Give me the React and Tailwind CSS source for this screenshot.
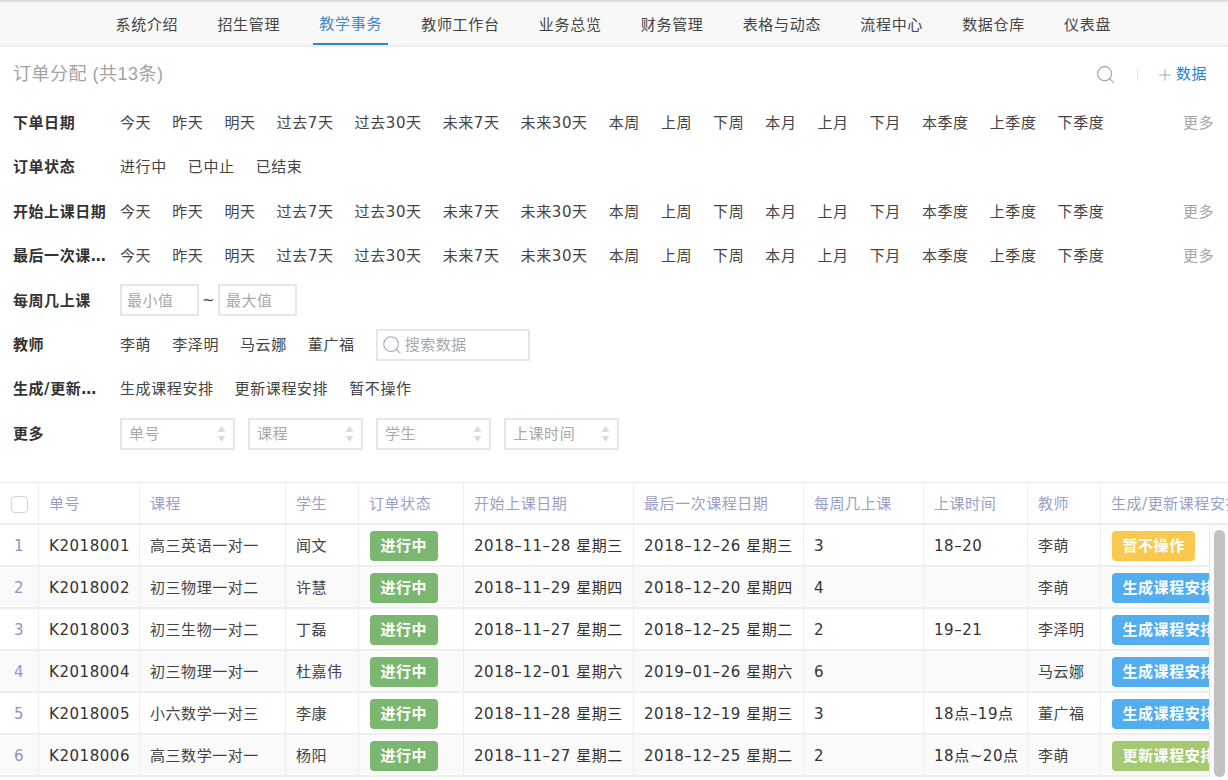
import React from "react";
import { Search, Plus } from "lucide-react";

const nav = ["系统介绍","招生管理","教学事务","教师工作台","业务总览","财务管理","表格与动态","流程中心","数据仓库","仪表盘"];
const dates = ["今天","昨天","明天","过去7天","过去30天","未来7天","未来30天","本周","上周","下周","本月","上月","下月","本季度","上季度","下季度"];
const cols = "grid grid-cols-[39px_101px_146px_73px_105px_170px_170px_120px_104px_73px_128px]";
const rows = [
  ["1","K2018001","高三英语一对一","闻文","2018–11–28 星期三","2018–12–26 星期三","3","18–20","李萌","暂不操作","y"],
  ["2","K2018002","初三物理一对二","许慧","2018–11–29 星期四","2018–12–20 星期四","4","","李萌","生成课程安排","b"],
  ["3","K2018003","初三生物一对二","丁磊","2018–11–27 星期二","2018–12–25 星期二","2","19–21","李泽明","生成课程安排","b"],
  ["4","K2018004","初三物理一对一","杜嘉伟","2018–12–01 星期六","2019–01–26 星期六","6","","马云娜","生成课程安排","b"],
  ["5","K2018005","小六数学一对三","李康","2018–11–28 星期三","2018–12–19 星期三","3","18点–19点","董广福","生成课程安排","b"],
  ["6","K2018006","高三数学一对一","杨阳","2018–11–27 星期二","2018–12–25 星期二","2","18点~20点","李萌","更新课程安排","g"],
];
const heads = ["单号","课程","学生","订单状态","开始上课日期","最后一次课程日期","每周几上课","上课时间","教师","生成/更新课程安排"];
const cell = "flex items-center px-[10px] pt-[2px] border-r border-[#eeeeee] whitespace-nowrap overflow-hidden";

function FilterRow({ label, children, more }) {
  return (
    <div className="flex items-center h-[44.4px] pl-[13px] pr-[14px] pt-[2px]">
      <div className="w-[95px] mr-[12px] shrink-0 font-bold text-[#333333] truncate">{label}</div>
      <div className="flex-1 flex items-center min-w-0">{children}</div>
      {more && <div className="text-[#a6a6a6]">更多</div>}
    </div>
  );
}
function Options({ items }) {
  return <div className="flex items-center gap-[21px] tracking-[0.6px] text-[#444444]">{items.map((d) => <span key={d}>{d}</span>)}</div>;
}
function SelectBox({ label, w }) {
  return (
    <div className={`flex items-center justify-between h-[32px] border-2 border-[#e6e6e6] pl-[7px] pr-[7px] text-[#a8a8a8] ${w}`}>
      <span>{label}</span>
      <svg width="9" height="18" viewBox="0 0 9 18"><path d="M4.5 1 L8.5 7 H0.5 Z" fill="#dcdcdc"/><path d="M4.5 17 L8.5 11 H0.5 Z" fill="#dcdcdc"/></svg>
    </div>
  );
}
function Tag({ t, k }) {
  const c = k === "y" ? "bg-[#f9c94e]" : k === "b" ? "bg-[#52aeee]" : k === "s" ? "bg-[#7cb772]" : "bg-[#a5c971]";
  return <span className={`inline-flex items-center shrink-0 ml-px h-[30px] px-[10.5px] rounded-[4px] text-white font-bold ${c}`}>{t}</span>;
}

export default function App() {
  return (
    <div className="w-[1228px] h-[780px] overflow-hidden bg-white text-[15px] tracking-[0.55px] text-[#333333] font-[DejaVu_Sans,Noto_Sans_CJK_SC,sans-serif]">
      <nav className="h-[47px] flex justify-start pl-[109.5px] gap-[27.1px] bg-[#f8f8f8] border-t-2 border-[#dddddd] border-b-2 border-b-[#eeeeee]">
        {nav.map((n) => (
          <div key={n} className={`h-[43px] px-[6px] pt-[3px] flex items-center text-[15px] tracking-[0.7px] ${n === "教学事务" ? "text-[#3f87c9] border-b-2 border-[#2a86d0]" : "text-[#444444]"}`}>{n}</div>
        ))}
      </nav>
      <div className="flex items-center justify-between h-[53px] pl-[13px] pr-[21px] pt-[2px]">
        <div className="text-[18px] tracking-[0.5px] text-[#a3a3a3] font-[Liberation_Sans,Noto_Sans_CJK_SC,sans-serif]">订单分配 (共13条)</div>
        <div className="flex items-center">
          <Search size={21} strokeWidth={1.2} className="text-[#9a9fc6]" />
          <div className="w-px h-[12px] bg-[#e4e4e4] ml-[21px] mr-[18px]" />
          <Plus size={18} strokeWidth={1.2} className="text-[#8e9cc4] mr-[2px]" />
          <span className="text-[#2f80c8]">数据</span>
        </div>
      </div>
      <div>
        <FilterRow label="下单日期" more><Options items={dates} /></FilterRow>
        <FilterRow label="订单状态"><Options items={["进行中","已中止","已结束"]} /></FilterRow>
        <FilterRow label="开始上课日期" more><Options items={dates} /></FilterRow>
        <FilterRow label="最后一次课程日期" more><Options items={dates} /></FilterRow>
        <FilterRow label="每周几上课">
          <div className="flex items-center -mt-[2px] text-[#a8a8a8]">
            <div className="w-[79px] h-[32px] border-2 border-[#e6e6e6] pl-[5px] pt-[2px] flex items-center">最小值</div>
            <span className="w-[19px] text-center text-[#444444]">~</span>
            <div className="w-[79px] h-[32px] border-2 border-[#e6e6e6] pl-[6px] pt-[2px] flex items-center">最大值</div>
          </div>
        </FilterRow>
        <FilterRow label="教师">
          <Options items={["李萌","李泽明","马云娜","董广福"]} />
          <div className="ml-[21px] w-[154px] h-[32px] border-2 border-[#e6e6e6] flex items-center pl-[3px] text-[#a8a8a8]">
            <Search size={22} strokeWidth={1.1} className="text-[#9a9fc6] mr-[2px]" />搜索数据
          </div>
        </FilterRow>
        <FilterRow label="生成/更新课程安排"><Options items={["生成课程安排","更新课程安排","暂不操作"]} /></FilterRow>
        <FilterRow label="更多">
          <div className="flex gap-[13px]">
            <SelectBox label="单号" w="w-[115px]" />
            <SelectBox label="课程" w="w-[115px]" />
            <SelectBox label="学生" w="w-[115px]" />
            <SelectBox label="上课时间" w="w-[115px]" />
          </div>
        </FilterRow>
      </div>
      <div className="mt-[27px] border-t border-[#eeeeee] overflow-hidden">
        <div className={`${cols} h-[42px] border-b-2 border-[#eeeeee] text-[#9a9fc6]`}>
          <div className={`${cell} justify-center !px-0`}>
            <span className="w-[17px] h-[17px] rounded-[4px] border border-[#d4d4d4] bg-white" />
          </div>
          {heads.map((h) => <div key={h} className={cell}>{h}</div>)}
        </div>
        <div className="relative">
          <div className="w-[1209px] overflow-hidden">
            {rows.map((r, i) => (
              <div key={r[0]} className={`${cols} h-[42px] border-b-2 border-[#eeeeee] ${i % 2 ? "bg-[#fafafa]" : "bg-white"}`}>
                <div className={`${cell} justify-center !px-0 text-[#8e93c4]`}>{r[0]}</div>
                <div className={`${cell} text-[#333333]`}>{r[1]}</div>
                <div className={`${cell} text-[#444444]`}>{r[2]}</div>
                <div className={`${cell} text-[#444444]`}>{r[3]}</div>
                <div className={cell}><Tag t="进行中" k="s" /></div>
                <div className={cell}>{r[4]}</div>
                <div className={cell}>{r[5]}</div>
                <div className={cell}>{r[6]}</div>
                <div className={cell}>{r[7]}</div>
                <div className={`${cell} text-[#444444]`}>{r[8]}</div>
                <div className={cell}><Tag t={r[9]} k={r[10]} /></div>
              </div>
            ))}
          </div>
          <div className="absolute right-0 top-0 bottom-0 w-[19px] bg-[#fafafa] border-l border-[#e8e8e8]">
            <div className="absolute left-[4px] top-[5px] bottom-0 w-[11px] rounded-full bg-[#c1c1c1]" />
          </div>
        </div>
      </div>
    </div>
  );
}
